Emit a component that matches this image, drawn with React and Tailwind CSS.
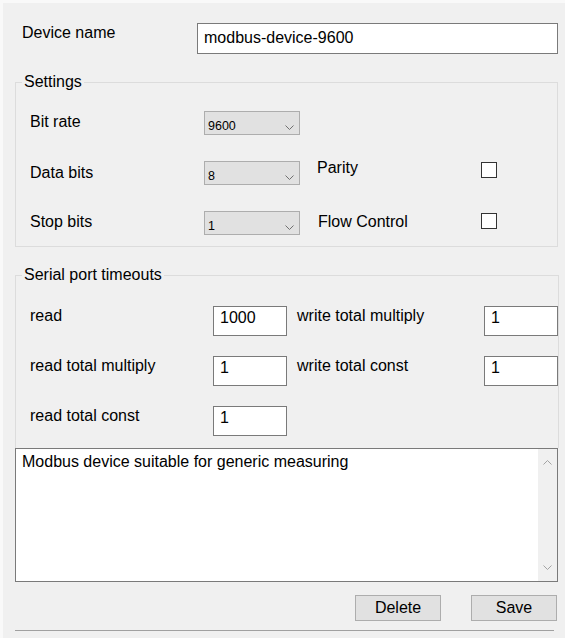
import React from 'react';

const font = { fontFamily: '"Liberation Sans", Arial, sans-serif' };

function Chevron({ up = false, className = '' }) {
  return (
    <svg width="9" height="5" viewBox="0 0 9 5" className={className}>
      <polyline
        points={up ? '0.5,4.5 4.5,0.5 8.5,4.5' : '0.5,0.5 4.5,4.5 8.5,0.5'}
        fill="none"
        stroke="currentColor"
        strokeWidth="1"
      />
    </svg>
  );
}

function Combo({ value }) {
  return (
    <div className="relative w-[96px] h-[24px] shrink-0 border border-[#adadad] bg-[#e1e1e1]">
      <div className="pl-[3px] pt-[7px] text-[12.5px] leading-[14px] text-black">{value}</div>
      <Chevron className="absolute right-[5px] top-[13px] text-[#707070]" />
    </div>
  );
}

function CheckBox({ className = '' }) {
  return <div className={`w-[16px] h-[16px] shrink-0 border border-[#333333] bg-white ${className}`} />;
}

function NumBox({ value }) {
  return (
    <div className="w-[74px] h-[30px] shrink-0 border border-[#7a7a7a] bg-white pl-[6px] pt-[2px] text-[16px] leading-[18px]">
      {value}
    </div>
  );
}

export default function App() {
  return (
    <div
      style={font}
      className="w-[565px] h-[638px] overflow-hidden bg-[#f0f0f0] border-l-[3px] border-t-[3px] border-[#f9f9f9] text-black text-[16px] leading-[18px]"
    >
      {/* Device name */}
      <div className="flex items-start pt-[20px]">
        <div className="ml-[19px] w-[175px] mt-[1px]">Device name</div>
        <div className="w-[361px] h-[31px] border border-[#7a7a7a] bg-white pl-[6px] pt-[5px]">
          modbus-device-9600
        </div>
      </div>

      {/* Settings */}
      <fieldset className="ml-[12px] mt-[19px] w-[543px] border border-[#dcdcdc] pl-[14px] pt-[20px] pb-[11px]">
        <legend className="-ml-[8px] px-[2px]">Settings</legend>
        <div className="flex flex-col gap-[26px]">
          <div className="flex items-start h-[24px]">
            <div className="w-[174px] mt-[2px]">Bit rate</div>
            <Combo value="9600" />
          </div>
          <div className="flex items-start h-[24px]">
            <div className="w-[174px] mt-[3px]">Data bits</div>
            <Combo value="8" />
            <div className="ml-[17px] w-[164px] -mt-[2px]">Parity</div>
            <CheckBox className="mt-[1px]" />
          </div>
          <div className="flex items-start h-[24px]">
            <div className="w-[174px] mt-[2px]">Stop bits</div>
            <Combo value="1" />
            <div className="ml-[18px] w-[163px] mt-[2px]">Flow Control</div>
            <CheckBox className="mt-[2px]" />
          </div>
        </div>
      </fieldset>

      {/* Serial port timeouts */}
      <fieldset className="ml-[12px] mt-[19px] w-[543px] border border-b-0 border-[#dcdcdc] pl-[14px] pt-[22px] pb-[12px]">
        <legend className="-ml-[8px] px-[2px]">Serial port timeouts</legend>
        <div className="flex flex-col gap-[20px]">
          <div className="flex items-start h-[30px]">
            <div className="w-[183px] mt-[1px]">read</div>
            <NumBox value="1000" />
            <div className="ml-[10px] w-[187px] mt-[1px]">write total multiply</div>
            <NumBox value="1" />
          </div>
          <div className="flex items-start h-[30px]">
            <div className="w-[183px] mt-[1px]">read total multiply</div>
            <NumBox value="1" />
            <div className="ml-[10px] w-[187px] mt-[1px]">write total const</div>
            <NumBox value="1" />
          </div>
          <div className="flex items-start h-[30px]">
            <div className="w-[183px] mt-[1px]">read total const</div>
            <NumBox value="1" />
          </div>
        </div>
      </fieldset>

      {/* Description */}
      <div className="ml-[12px] w-[543px] h-[134px] border border-[#7a7a7a] bg-white flex">
        <div className="flex-1 pl-[6px] pt-[4px]">Modbus device suitable for generic measuring</div>
        <div className="w-[19px] h-full bg-[#f0f0f0] flex flex-col items-center justify-between py-[11px] text-[#a3a3a3]">
          <Chevron up />
          <Chevron />
        </div>
      </div>

      {/* Buttons */}
      <div className="flex justify-end gap-[30px] pr-[8px] mt-[13px]">
        <button className="w-[86px] h-[26px] border border-[#adadad] bg-[#e1e1e1] text-[16px] leading-[18px]">Delete</button>
        <button className="w-[86px] h-[26px] border border-[#adadad] bg-[#e1e1e1] text-[16px] leading-[18px]">Save</button>
      </div>

      <div className="ml-[12px] mt-[9px] w-[539px] h-[1px] bg-[#a0a0a0]" />
    </div>
  );
}
